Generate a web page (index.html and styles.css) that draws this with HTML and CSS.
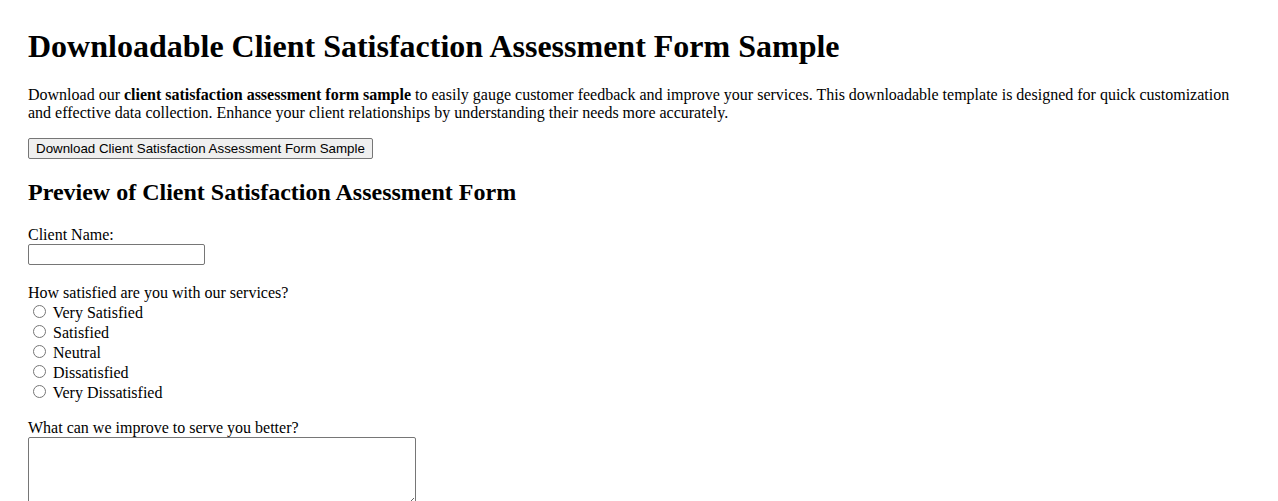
FILE: index.html
```html
<!DOCTYPE html>
<html lang="en">
<head>
<meta charset="utf-8">
<title>Downloadable Client Satisfaction Assessment Form Sample</title>
<link rel="stylesheet" href="styles.css">
</head>
<body>
<div class="page">
  <h1 class="title">Downloadable Client Satisfaction Assessment Form Sample</h1>
  <p class="intro">Download our <strong>client satisfaction assessment form sample</strong> to easily gauge customer feedback and improve your services. This downloadable template is designed for quick customization and effective data collection. Enhance your client relationships by understanding their needs more accurately.</p>
  <button class="download" type="button">Download Client Satisfaction Assessment Form Sample</button>
  <h2 class="subtitle">Preview of Client Satisfaction Assessment Form</h2>
  <form class="form">
    <div class="field">
      <label class="label" for="name">Client Name:</label>
      <input class="text-input" id="name" type="text">
    </div>
    <div class="field field-radios">
      <div class="label">How satisfied are you with our services?</div>
      <label class="option"><input class="radio" type="radio" name="sat"> Very Satisfied</label>
      <label class="option"><input class="radio" type="radio" name="sat"> Satisfied</label>
      <label class="option"><input class="radio" type="radio" name="sat"> Neutral</label>
      <label class="option"><input class="radio" type="radio" name="sat"> Dissatisfied</label>
      <label class="option"><input class="radio" type="radio" name="sat"> Very Dissatisfied</label>
    </div>
    <div class="field">
      <label class="label" for="improve">What can we improve to serve you better?</label>
      <textarea class="area" id="improve"></textarea>
    </div>
  </form>
</div>
</body>
</html>
```

FILE: styles.css
```css
html, body {
  margin: 0;
  padding: 0;
  background: #ffffff;
}

body {
  font-family: "Liberation Serif", "Times New Roman", serif;
  font-size: 16px;
  color: #000000;
}

.page {
  padding: 28px 28px 28px 28px;
}

.title {
  font-size: 32px;
  font-weight: bold;
  margin: 0 0 21px 0;
}

.intro {
  margin: 0 0 16px 0;
  line-height: 18px;
}

.download {
  font-family: "Liberation Sans", Arial, sans-serif;
  font-size: 13.33px;
  height: 21px;
  padding: 1px 7px;
  border: 1px solid #767676;
  border-radius: 2px;
  background: #efefef;
  color: #000;
  display: block;
}

.subtitle {
  font-size: 24px;
  font-weight: bold;
  margin: 20px 0 20px 0;
}

.form {
  margin: 0;
}

.field {
  margin-bottom: 19px;
}

.field-radios {
  margin-bottom: 17px;
}

.label {
  display: block;
  line-height: 18px;
}

.text-input {
  display: block;
  width: 177px;
  height: 21px;
  box-sizing: border-box;
  border: 1px solid #767676;
  border-radius: 2px;
  padding: 1px 2px;
  font-family: "Liberation Sans", Arial, sans-serif;
  font-size: 13.33px;
  margin: 0;
}

.option {
  display: block;
  height: 20px;
  line-height: 18px;
}

.radio {
  width: 13px;
  height: 13px;
  margin: 3px 3px 0 5px;
}

.area {
  display: block;
  width: 388px;
  height: 70px;
  box-sizing: border-box;
  border: 1px solid #767676;
  border-radius: 2px;
  margin: 0;
  font-family: "Liberation Mono", monospace;
  font-size: 13.33px;
}
```
